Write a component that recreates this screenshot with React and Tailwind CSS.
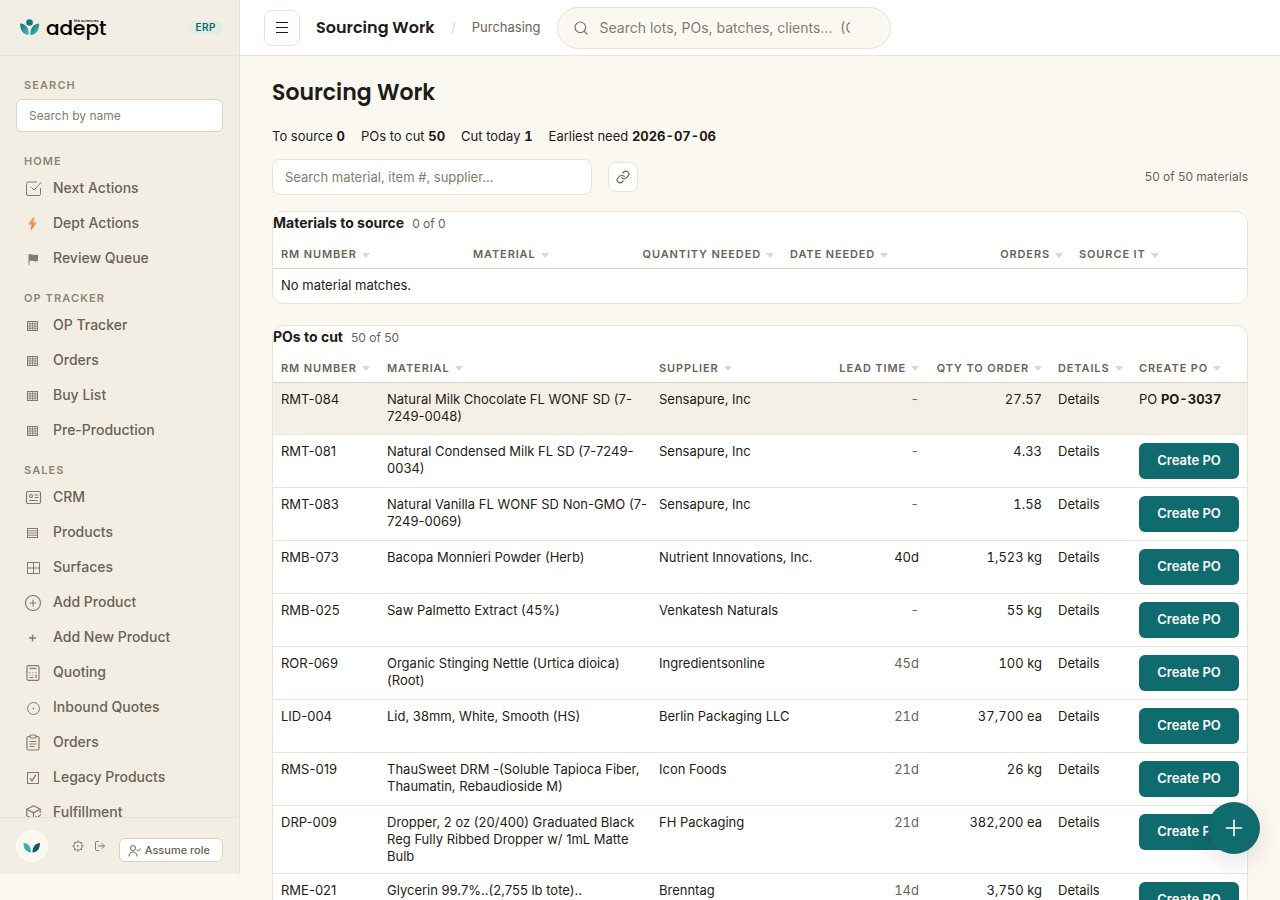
import React, { useState } from 'react'
import { CirclePlus, Link, LogOut, Plus, Search } from 'lucide-react'
import clsx from 'clsx'

const CheckSquareIcon = () => (
  <svg width="17" height="17" viewBox="0 0 17 17" fill="none" stroke="currentColor" strokeLinecap="round" strokeLinejoin="round">
    <path d="m6.500 7.500 2.500 2.500 7-7.500" />
    <path d="M15.500 8.500V14a1.500 1.500 0 0 1-1.500 1.500H3A1.500 1.500 0 0 1 1.500 14V3.500A1.500 1.500 0 0 1 3 2h8.500" />
  </svg>
)

const BoltIcon = () => (
  <svg width="16" height="16" viewBox="0 0 16 16">
    <defs>
      <linearGradient id="bolt" x1="0" y1="0" x2="0" y2="1">
        <stop offset="0" stopColor="#f9b13f" />
        <stop offset="1" stopColor="#f2616a" />
      </linearGradient>
    </defs>
    <path d="M8.200 1 3.200 8.600h3.400L5.600 15l6.200-8.600H8.400L9.400 1z" fill="url(#bolt)" />
  </svg>
)

const FlagIcon = () => (
  <svg width="11" height="12" viewBox="0 0 11 12" fill="currentColor">
    <path d="M.5 1h1v.6c1.300-.6 2.500-.4 4 .1 1.600.5 2.700.6 4.500 0v6.400c-1.800.6-3 .5-4.500 0-1.500-.4-2.700-.6-4 0v3.700h-1z" />
  </svg>
)

const GridIcon = () => (
  <svg width="12" height="10" viewBox="0 0 12 10" fill="none" stroke="currentColor" strokeWidth="1">
    <rect x=".5" y=".5" width="10" height="9" />
    <path d="M3 0v10M5.500 0v10M8 0v10M0 2.750h11M0 5h11M0 7.250h11" strokeWidth=".8" />
  </svg>
)

const RowsIcon = () => (
  <svg width="12" height="10" viewBox="0 0 12 10" fill="none" stroke="currentColor">
    <rect x=".5" y=".5" width="10" height="9" />
    <path d="M0 2.750h11M0 5h11M0 7.250h11" strokeWidth=".9" />
  </svg>
)

const ContactCardIcon = () => (
  <svg width="17" height="17" viewBox="0 0 17 17" fill="none" stroke="currentColor" strokeWidth="1.200" strokeLinecap="round">
    <rect x="1.500" y="2.500" width="14" height="12" rx="1.500" />
    <circle cx="6" cy="7" r="1.500" />
    <path d="M10 6h3M10 8.500h3M4.500 11.500h8" />
  </svg>
)

const WindowIcon = () => (
  <svg width="13" height="13" viewBox="0 0 13 13" fill="none" stroke="currentColor">
    <path d="M.5 1.500h12v11H.5zM6.500 1.500v11M.5 7h12" />
  </svg>
)

const SmallPlusIcon = () => (
  <svg width="8" height="8" viewBox="0 0 8 8" fill="none" stroke="currentColor" strokeWidth="1.400">
    <path d="M3.500 .5v7M0 4h7" />
  </svg>
)

const CalculatorIcon = () => (
  <svg width="14" height="16" viewBox="0 0 14 16" fill="none" stroke="currentColor" strokeWidth="1.200">
    <rect x="1" y=".6" width="12" height="14.800" rx="1.500" />
    <path d="M3.500 3.500h7" />
    <path d="M3.500 7.500h1M6.500 7.500h1M9.500 7.500h1M3.500 10h1M6.500 10h1M3.500 12.500h4M10 9.500v3.500" />
  </svg>
)

const TargetIcon = () => (
  <svg width="13" height="14" viewBox="0 0 13 14" fill="none" stroke="currentColor">
    <circle cx="6.500" cy="7.500" r="6" />
    <circle cx="6.500" cy="7.500" r=".9" fill="currentColor" stroke="none" />
  </svg>
)

const ClipboardIcon = () => (
  <svg width="14" height="17" viewBox="0 0 14 17" fill="none" stroke="currentColor" strokeWidth="1.200" strokeLinecap="round" strokeLinejoin="round">
    <path d="M4 2.500H2.500A1.500 1.500 0 0 0 1 4v10.500A1.500 1.500 0 0 0 2.500 16h9a1.500 1.500 0 0 0 1.500-1.500V4a1.500 1.500 0 0 0-1.500-1.500H10" />
    <rect x="4" y="1" width="6" height="3" rx="1" />
    <path d="M4 7.500h6M4 10h6M4 12.500h4" />
  </svg>
)

const TickBoxIcon = () => (
  <svg width="12" height="12" viewBox="0 0 12 12" fill="none" stroke="currentColor">
    <rect x=".5" y=".5" width="11" height="11" />
    <path d="m3 6.300 2 2.500 3.800-6" strokeWidth="1.300" />
  </svg>
)

const BoxCheckIcon = () => (
  <svg width="17" height="17" viewBox="0 0 24 24" fill="none" stroke="currentColor" strokeWidth="1.700" strokeLinecap="round" strokeLinejoin="round">
    <path d="M21.500 12V7.500L12 2.500 2.500 7.500v9l9.500 5 2-1" />
    <path d="m2.500 7.500 9.500 5 9.500-5M12 12.500v9" />
    <path d="m15.500 17.500 2.500 2 4-4.500" />
  </svg>
)

const UserCheckIcon = () => (
  <svg width="13" height="13" viewBox="0 0 13 13" fill="none" stroke="currentColor" strokeLinecap="round" strokeLinejoin="round">
    <circle cx="5" cy="4" r="2.500" />
    <path d="M1 12c0-2.600 1.700-4 4-4s4 1.400 4 4M9 6l1.200 1L12.500 4.800" />
  </svg>
)

const GearIcon = () => (
  <svg width="12" height="12" viewBox="0 0 12 12" fill="none" stroke="currentColor">
    <circle cx="6" cy="6" r="4.100" />
    <circle cx="6" cy="6" r="0.500" fill="currentColor" />
    <path d="M6 .4v1.500M6 10.100v1.500M.4 6h1.500M10.100 6h1.500M2 2l1.100 1.100M8.900 8.900 10 10M10 2 8.900 3.100M3.100 8.900 2 10" />
  </svg>
)

const AddCircleIcon = () => <CirclePlus size={18} strokeWidth={1.6} />

const navSections = [
  {
    title: 'Home',
    items: [
      { label: 'Next Actions', icon: CheckSquareIcon },
      { label: 'Dept Actions', icon: BoltIcon },
      { label: 'Review Queue', icon: FlagIcon }
    ]
  },
  {
    title: 'OP Tracker',
    items: [
      { label: 'OP Tracker', icon: GridIcon },
      { label: 'Orders', icon: GridIcon },
      { label: 'Buy List', icon: GridIcon },
      { label: 'Pre-Production', icon: GridIcon }
    ]
  },
  {
    title: 'Sales',
    items: [
      { label: 'CRM', icon: ContactCardIcon },
      { label: 'Products', icon: RowsIcon },
      { label: 'Surfaces', icon: WindowIcon },
      { label: 'Add Product', icon: AddCircleIcon },
      { label: 'Add New Product', icon: SmallPlusIcon },
      { label: 'Quoting', icon: CalculatorIcon },
      { label: 'Inbound Quotes', icon: TargetIcon },
      { label: 'Orders', icon: ClipboardIcon },
      { label: 'Legacy Products', icon: TickBoxIcon },
      { label: 'Fulfillment', icon: BoxCheckIcon }
    ]
  }
]

const sourceColumns = [
  { label: 'RM Number', width: 'w-[192px]' },
  { label: 'Material' },
  { label: 'Quantity Needed', width: 'w-[149px]', right: true },
  { label: 'Date Needed', width: 'w-[209px]' },
  { label: 'Orders', width: 'w-[80px]', right: true },
  { label: 'Source It', width: 'w-[176px]' }
]

const poColumns = [
  { label: 'RM Number', width: 'w-[106px]' },
  { label: 'Material' },
  { label: 'Supplier', width: 'w-[179px]' },
  { label: 'Lead Time', width: 'w-[97px]', right: true },
  { label: 'Qty to Order', width: 'w-[123px]', right: true },
  { label: 'Details', width: 'w-[81px]' },
  { label: 'Create PO', width: 'w-[116px]' }
]

const purchaseOrders = [
  { rm: 'RMT-084', material: 'Natural Milk Chocolate FL WONF SD (7-7249-0048)', supplier: 'Sensapure, Inc', lead: '-', qty: '27.57', po: 'PO-3037' },
  { rm: 'RMT-081', material: 'Natural Condensed Milk FL SD (7-7249-0034)', supplier: 'Sensapure, Inc', lead: '-', qty: '4.33' },
  { rm: 'RMT-083', material: 'Natural Vanilla FL WONF SD Non-GMO (7-7249-0069)', supplier: 'Sensapure, Inc', lead: '-', qty: '1.58' },
  { rm: 'RMB-073', material: 'Bacopa Monnieri Powder (Herb)', supplier: 'Nutrient Innovations, Inc.', lead: '40d', qty: '1,523 kg', confirmed: true },
  { rm: 'RMB-025', material: 'Saw Palmetto Extract (45%)', supplier: 'Venkatesh Naturals', lead: '-', qty: '55 kg' },
  { rm: 'ROR-069', material: 'Organic Stinging Nettle (Urtica dioica) (Root)', supplier: 'Ingredientsonline', lead: '45d', qty: '100 kg' },
  { rm: 'LID-004', material: 'Lid, 38mm, White, Smooth (HS)', supplier: 'Berlin Packaging LLC', lead: '21d', qty: '37,700 ea' },
  { rm: 'RMS-019', material: 'ThauSweet DRM -(Soluble Tapioca Fiber, Thaumatin, Rebaudioside M)', supplier: 'Icon Foods', lead: '21d', qty: '26 kg' },
  { rm: 'DRP-009', material: 'Dropper, 2 oz (20/400) Graduated Black Reg Fully Ribbed Dropper w/ 1mL Matte Bulb', supplier: 'FH Packaging', lead: '21d', qty: '382,200 ea' },
  { rm: 'RME-021', material: 'Glycerin 99.7%..(2,755 lb tote)..', supplier: 'Brenntag', lead: '14d', qty: '3,750 kg' }
]

const Logo = () => (
  <a href="#home" className="flex items-center gap-[6px]">
    <svg width="20" height="18" viewBox="0 0 20 18">
      <defs>
        <linearGradient id="leaf" x1="0" y1="0" x2="1" y2="1">
          <stop offset="0" stopColor="#17706f" />
          <stop offset="1" stopColor="#3cc4c4" />
        </linearGradient>
      </defs>
      <circle cx="9.500" cy="3.500" r="3.300" fill="#17777b" />
      <path d="M.2 4.500C5 4.600 9 8 8.800 16 3 15.500 .2 11.500 .2 4.500z" fill="url(#leaf)" />
      <path d="M19.200 4.500C14.400 4.600 10.200 8 10.400 16 16.200 15.500 19.200 11.500 19.200 4.500z" fill="url(#leaf)" />
    </svg>
    <span className="relative font-[Poppins,Inter,sans-serif] text-[20px] leading-7 font-medium text-black">
      adept
      <span className="absolute top-1 left-7 text-[4px] leading-[5px] whitespace-nowrap">life sciences</span>
    </span>
  </a>
)

const NavLabel = ({ children }) => (
  <div className="px-2 text-[11px] leading-[18px] font-semibold tracking-widest text-[#8f8577] uppercase">{children}</div>
)

const Sidebar = () => (
  <aside className="flex h-[calc(100vh-26px)] w-60 shrink-0 flex-col border-r border-[#e8e0d0] bg-[#f3eee3]">
    <div className="flex h-14 shrink-0 items-center justify-between border-b border-[#e8e0d0] pr-4 pl-5">
      <Logo />
      <span className="rounded-full bg-[#e0ece8] px-[7px] text-[10px] leading-[13px] font-semibold tracking-wider text-[#0f6b6d]">ERP</span>
    </div>

    <div className="flex-1 overflow-hidden px-4 pt-5">
      <label className="block">
        <NavLabel>Search</NavLabel>
        <input
          type="search"
          placeholder="Search by name"
          className="mt-[5px] block h-[33px] w-full rounded-md border border-[#ddd2bd] bg-white px-3 text-[12px] text-[#1f1b16] outline-none placeholder:text-[#857c71]"
        />
      </label>

      <nav className="mt-5 flex flex-col gap-[14px]">
        {navSections.map(section => (
          <div key={section.title}>
            <NavLabel>{section.title}</NavLabel>
            {section.items.map(({ label, icon: Icon }) => (
              <a key={label} href="#nav" className="flex h-[35px] items-center gap-[11px] px-2 text-[14px] font-medium text-[#6b6257]">
                <span className="flex w-[18px] justify-center pt-[2px] text-[#857a6b]">
                  <Icon />
                </span>
                {label}
              </a>
            ))}
          </div>
        ))}
      </nav>
    </div>

    <div className="flex h-[57px] shrink-0 items-center border-t border-[#e8e0d0] px-4">
      <span className="flex size-8 items-center justify-center rounded-full border border-white bg-[#fbf8f1]">
        <svg width="18" height="12" viewBox="0 0 18 12" className="mt-1">
          <path d="M.5 1C5 1 8 4.500 8 10.500 3.500 10.500.5 7 .5 1z" fill="#35b0ae" />
          <path d="M17 1C12.500 1 9.500 4.500 9.500 10.500 14 10.500 17 7 17 1z" fill="#125a6b" />
        </svg>
      </span>
      <div className="ml-6 flex gap-[10px] text-[#857a6b]">
        <button type="button" aria-label="Settings"><GearIcon /></button>
        <button type="button" aria-label="Log out"><LogOut size={12} strokeWidth={2} /></button>
      </div>
      <button type="button" className="mt-2 ml-auto flex h-6 items-center gap-1 rounded-md border border-[#ddd2bd] bg-white pr-3 pl-2 text-[11px] font-medium text-[#6b6257]">
        <UserCheckIcon />
        Assume role
      </button>
    </div>
  </aside>
)

const TopBar = () => (
  <header className="flex h-14 shrink-0 items-center gap-4 border-b border-[#ece3d4] bg-white px-6">
    <button type="button" aria-label="Toggle menu" className="flex size-9 items-center justify-center rounded-lg border border-[#ece3d4] text-[#1f1b16]">
      <svg width="12" height="11" viewBox="0 0 12 11" stroke="currentColor">
        <path d="M0 .5h12M0 5.500h12M0 10.500h12" />
      </svg>
    </button>
    <span className="font-[Poppins,Inter,sans-serif] text-[16px] font-semibold text-[#1f1b16]">Sourcing Work</span>
    <span className="text-[14px] text-[#ddd2bd]">/</span>
    <span className="text-[13px] text-[#6b6259]">Purchasing</span>
    <label className="flex h-[42px] w-[334px] items-center gap-[11px] rounded-full border border-[#ece3d4] bg-[#fbf8f1] pr-[26px] pl-[15px] text-[#6b7280]">
      <Search size={16} strokeWidth={1.8} className="shrink-0" />
      <input
        type="search"
        aria-label="Search everything"
        placeholder="Search lots, POs, batches, clients…  (Ctrl+K)"
        className="min-w-0 flex-1 text-[14px] text-[#1f1b16] outline-none placeholder:text-[#857c71]"
      />
    </label>
  </header>
)

const TableHead = ({ columns }) => (
  <thead>
    <tr className="border-b border-[#ddd2bd]">
      {columns.map(column => (
        <th key={column.label} className={clsx('px-2 pt-[10px] pb-[5px]', column.width, column.right ? 'text-right' : 'text-left')}>
          <button type="button" className="inline-flex items-center gap-[5px] text-[11px] leading-[18px] font-semibold tracking-[0.08em] whitespace-nowrap text-[#6b6259] uppercase">
            {column.label}
            <svg width="8" height="5" viewBox="0 0 8 5" className="mt-[2px]">
              <path d="M0 0h8L4 5z" fill="#ddd6c9" />
            </svg>
          </button>
        </th>
      ))}
    </tr>
  </thead>
)

const Card = ({ title, count, children }) => (
  <section className="overflow-hidden rounded-xl border border-[#ece3d4] bg-white">
    <div className="flex items-baseline gap-2">
      <h2 className="text-[14px] leading-[22px] font-bold">{title}</h2>
      <span className="text-[12px] leading-[22px] text-[#6b6259]">{count}</span>
    </div>
    {children}
  </section>
)

const PoRow = ({ row }) => (
  <tr className={clsx('h-[52px] border-b border-[#ece3d4]', row.po && 'bg-[#f5f0e6]')}>
    <td className="p-2 align-top">{row.rm}</td>
    <td className="py-2 pl-2 align-top">{row.material}</td>
    <td className="p-2 align-top">{row.supplier}</td>
    <td className={clsx('p-2 text-right align-top tabular-nums', !row.confirmed && 'text-[#6b6259]')}>{row.lead}</td>
    <td className="p-2 text-right align-top tabular-nums">{row.qty}</td>
    <td className="p-2 align-top"><a href="#details">Details</a></td>
    <td className="p-2 align-top whitespace-nowrap">
      {row.po ? (
        <span>PO <b className="font-bold tabular-nums">{row.po}</b></span>
      ) : (
        <button type="button" className="block h-9 w-full rounded-md bg-[#0f6b6d] text-[13px] font-semibold text-white">
          Create PO
        </button>
      )}
    </td>
  </tr>
)

const Stat = ({ label, value }) => (
  <span>{label} <b className="font-bold tabular-nums">{value}</b></span>
)

const App = () => {
  const [query, setQuery] = useState('')
  const rows = purchaseOrders.filter(row =>
    `${row.rm} ${row.material} ${row.supplier}`.toLowerCase().includes(query.toLowerCase())
  )

  return (
    <div className="flex h-screen overflow-hidden bg-[#fbf8f1] font-[Inter,sans-serif] text-[#1f1b16]">
      <Sidebar />

      <div className="flex min-w-0 flex-1 flex-col">
        <TopBar />

        <main className="flex-1 overflow-y-auto px-8 pt-[21px] [scrollbar-width:none]">
          <h1 className="font-[Poppins,Inter,sans-serif] text-[22px] leading-8 font-semibold">Sourcing Work</h1>

          <div className="mt-[17px] flex gap-4 text-[13px] leading-5">
            <Stat label="To source" value="0" />
            <Stat label="POs to cut" value="50" />
            <Stat label="Cut today" value="1" />
            <Stat label="Earliest need" value="2026-07-06" />
          </div>

          {/* Filter bar */}
          <div className="mt-[13px] flex items-center gap-4">
            <input
              type="search"
              aria-label="Search materials"
              value={query}
              onChange={e => setQuery(e.target.value)}
              placeholder="Search material, item #, supplier..."
              className="h-9 w-80 rounded-lg border border-[#ece3d4] bg-white px-3 text-[13px] outline-none placeholder:text-[#857c71]"
            />
            <button type="button" aria-label="Copy link" className="flex size-[30px] items-center justify-center rounded-lg border border-[#ece3d4] bg-white text-[#6b6259]">
              <Link size={14} strokeWidth={2} />
            </button>
            <span className="ml-auto text-[12px] text-[#6b6259]">50 of 50 materials</span>
          </div>

          <div className="mt-4 flex flex-col gap-[21px]">
            <Card title="Materials to source" count="0 of 0">
              <table className="w-full table-fixed text-[13px] leading-[17px]">
                <TableHead columns={sourceColumns} />
                <tbody>
                  <tr className="h-[34px]">
                    <td colSpan={sourceColumns.length} className="px-2">No material matches.</td>
                  </tr>
                </tbody>
              </table>
            </Card>

            <Card title="POs to cut" count="50 of 50">
              <table className="w-full table-fixed text-[13px] leading-[17px]">
                <TableHead columns={poColumns} />
                <tbody>
                  {rows.map(row => <PoRow key={row.rm} row={row} />)}
                </tbody>
              </table>
            </Card>
          </div>
        </main>
      </div>

      <button type="button" aria-label="Add" className="fixed right-5 bottom-[46px] flex size-[52px] items-center justify-center rounded-full bg-[#0f6b6d] text-white shadow-[0_8px_24px_rgba(31,27,22,0.12)]">
        <Plus size={26} strokeWidth={1.5} />
      </button>
    </div>
  )
}

export default App
